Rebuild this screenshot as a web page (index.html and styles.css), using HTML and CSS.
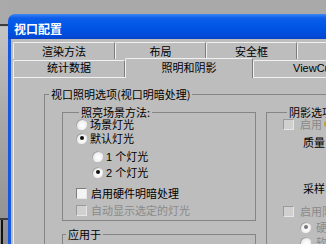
FILE: index.html
```html
<!DOCTYPE html>
<html lang="zh">
<head>
	<meta charset="utf-8">
	<title>视口配置</title>
	<link rel="stylesheet" href="styles.css">
</head>
<body>
<div class="desktop">
	<div class="strip">
		<i class="mark top"></i>
		<i class="mark low"></i>
		<i class="mark low2"></i>
		<i class="post"></i>
	</div>
	<div class="window">
		<div class="titlebar">视口配置</div>
		<div class="client">
			<div class="tabs row1">
				<div class="tab w102">渲染方法</div>
				<div class="tab w91">布局</div>
				<div class="tab w91">安全框</div>
				<div class="tab w150"></div>
			</div>
			<div class="tabs row2">
				<div class="tab w112">统计数据</div>
				<div class="tab cur w128">照明和阴影</div>
				<div class="tab w130">ViewCube</div>
			</div>
			<div class="panel">
				<fieldset class="grp outer">
					<legend>视口照明选项(视口明暗处理)</legend>
					<div class="cols">
						<div class="left">
							<fieldset class="grp method">
								<legend>照亮场景方法:</legend>
								<div class="opt r1"><span class="rd"></span><span class="lbl">场景灯光</span></div>
								<div class="opt r2"><span class="rd on"></span><span class="lbl">默认灯光</span></div>
								<div class="opt sub r3"><span class="rd"></span><span class="lbl">1 个灯光</span></div>
								<div class="opt sub r4"><span class="rd on"></span><span class="lbl">2 个灯光</span></div>
								<div class="opt r5"><span class="cb"></span><span class="lbl lb4">启用硬件明暗处理</span></div>
								<div class="opt r6 off"><span class="cb"></span><span class="lbl lb4">自动显示选定的灯光</span></div>
							</fieldset>
							<fieldset class="grp apply">
								<legend>应用于</legend>
							</fieldset>
						</div>
						<fieldset class="grp shadow">
							<legend>阴影选项:</legend>
							<div class="opt s1 off"><span class="cb"></span><span class="lbl lb6">启用</span><span class="warn"></span></div>
							<div class="opt s2 field">质量</div>
							<div class="opt s3 field">采样</div>
							<div class="opt s4 off"><span class="cb"></span><span class="lbl lb6">启用阴影</span></div>
							<div class="opt s5 off sub"><span class="rd on"></span><span class="lbl lb5">硬</span></div>
							<div class="opt s6 off sub"><span class="rd"></span><span class="lbl lb5">软</span></div>
						</fieldset>
					</div>
				</fieldset>
			</div>
		</div>
	</div>
</div>
</body>
</html>
```

FILE: styles.css
```css
html, body { margin: 0; padding: 0; }
body {
	font-family: "Liberation Sans", "Noto Sans CJK SC", sans-serif;
	font-size: 11px;
	color: black;
	background-color: #a9a9a9;
}
.desktop {
	display: flex;
	width: 326px;
	height: 244px;
	overflow: hidden;
	background-color: #a9a9a9;
}

/*** Stuff behind the dialog *****************************************/
.strip {
	flex: none;
	display: flex;
	flex-direction: column;
	width: 8px;
	height: 244px;
	background: linear-gradient(#aaaaaa 0, #aaaaaa 26px, #c4c4c4 27px, #a8a8a8 120px, #8e8e8e 100%);
}
.mark { display: block; height: 2px; background-color: #3c3c3c; }
.mark.top { margin-top: 24px; }
.mark.low { margin-top: 192px; height: 1px; }
.mark.low2 { margin-top: 1px; height: 1px; }
.post { display: block; width: 2px; height: 30px; margin-left: 1px; background-color: #111; }

/*** Window ***********************************************************/
.window {
	flex: none;
	width: 380px;
	margin-top: 14px;
}
.titlebar {
	height: 25px;
	box-sizing: border-box;
	padding: 3px 0 0 6px;
	line-height: 23px;
	font-family: "Noto Sans CJK SC", sans-serif;
	font-size: 12px;
	font-weight: bold;
	color: white;
	border-radius: 7px 7px 0 0;
	background: linear-gradient(#3f86f4 0, #0d5fea 4px, #0056e6 50%, #004ad9 88%, #0742c4 100%);
}
.client {
	height: 230px;
	border-left: 3px solid #1556e2;
	padding: 3px 0 0 2px;
	background-color: #bdbdbd;
}

/*** Tabs *************************************************************/
.tabs { display: flex; }
.row1 { height: 16px; }
.row2 { height: 19px; }
.tab {
	flex: none;
	box-sizing: border-box;
	text-align: center;
	line-height: 14px;
	white-space: nowrap;
	overflow: hidden;
	border-top: 1px solid #f0f0f0;
	border-left: 1px solid #f0f0f0;
	border-right: 1px solid #7c7c7c;
	border-radius: 2px 2px 0 0;
	background-color: #bdbdbd;
}
.row1 .tab { height: 17px; padding-top: 2px; }
.row2 .tab { height: 17px; margin-top: 2px; }
.row2 .tab.cur {
	position: relative;
	z-index: 1;
	height: 20px;
	margin-top: 0;
	padding-top: 2px;
}
.w91 { width: 91px; }
.w102 { width: 102px; }
.w112 { width: 112px; }
.w128 { width: 128px; }
.w130 { width: 130px; }
.w150 { width: 150px; }

.panel {
	height: 200px;
	border-top: 1px solid #f0f0f0;
	border-left: 1px solid #f0f0f0;
	padding: 9px 0 0 30px;
}

/*** Group boxes ******************************************************/
.grp {
	box-sizing: border-box;
	margin: 0;
	padding: 0;
	min-width: 0;
	border: 1px solid #858585;
}
.grp legend {
	padding: 0 2px;
	line-height: 14px;
	font-family: "Noto Sans CJK SC", sans-serif;
}
.outer { width: 400px; height: 180px; }
.outer > legend { margin-left: 4px; }
.cols { display: flex; align-items: flex-start; }
.left { margin-left: 17px; }
.method {
	display: flex;
	flex-direction: column;
	width: 194px;
	margin-top: 6px;
	padding: 0 0 3px 13px;
}
.method > legend, .shadow > legend { line-height: 10px; }
.method > legend, .apply > legend { margin-left: 3px; }
.apply { width: 194px; height: 40px; margin-top: 6px; }
.shadow {
	display: flex;
	flex-direction: column;
	width: 100px;
	height: 170px;
	margin: 6px 0 0 10px;
	padding-left: 16px;
}
.shadow > legend { margin-left: 4px; }

/*** Options **********************************************************/
.opt {
	display: flex;
	align-items: center;
	height: 14px;
	white-space: nowrap;
	font-family: "Liberation Sans", "Noto Sans CJK SC", sans-serif;
}
.opt.sub { padding-left: 16px; }
.opt.off { color: #8a8a8a; }
.r1 { margin-top: 0; }
.r2 { margin-top: 0; }
.r3 { margin-top: 4px; }
.r4 { margin-top: 2px; }
.r5 { margin-top: 7px; }
.r6 { margin-top: 3px; }
.s1 { margin-top: 0; }
.s2 { margin-top: 4px; }
.s3 { margin-top: 32px; }
.s4 { margin-top: 9px; }
.s5 { margin-top: 2px; }
.s6 { margin-top: 1px; }
.field { padding-left: 20px; }
.shadow .opt.sub { padding-left: 17px; }

.lbl { margin-left: 3px; }
.lbl.lb4 { margin-left: 4px; }
.lbl.lb5 { margin-left: 5px; }
.lbl.lb6 { margin-left: 6px; }

.rd {
	flex: none;
	display: flex;
	align-items: center;
	justify-content: center;
	width: 11px;
	height: 11px;
	border-radius: 50%;
	background: radial-gradient(circle at 60% 60%, #ffffff 0, #f2f2f2 45%, #cdcdcd 100%);
	box-shadow: inset 1px 1px 0 #a4a4a4;
}
.rd.on::after {
	content: "";
	width: 4px;
	height: 4px;
	border-radius: 50%;
	background-color: #111;
}
.off .rd.on::after { background-color: #777; }
.cb {
	flex: none;
	box-sizing: border-box;
	width: 11px;
	height: 11px;
	border: 1px solid;
	border-color: #7e7e7e #e6e6e6 #e6e6e6 #7e7e7e;
	background-color: #f4f4f4;
}
.off .cb { background-color: #d0d0d0; border-color: #9a9a9a #e6e6e6 #e6e6e6 #9a9a9a; }
.warn {
	flex: none;
	width: 5px;
	height: 6px;
	margin-left: 2px;
	border-radius: 2px;
	background-color: #c8a040;
}
```
